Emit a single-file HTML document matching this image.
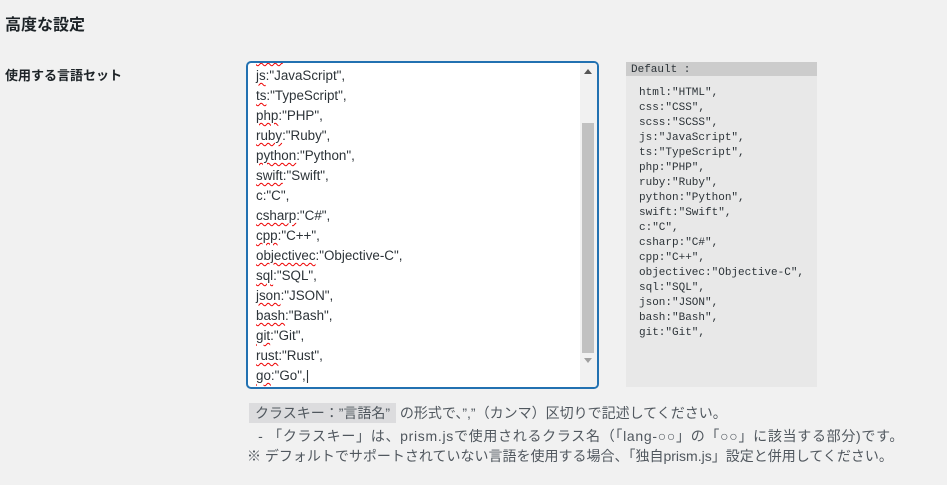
<!DOCTYPE html>
<html><head><meta charset="utf-8"><style>
body{margin:0;background:#f1f1f1;width:947px;height:485px;overflow:hidden;font-family:"Liberation Sans","Noto Sans CJK JP",sans-serif;color:#1d2327;position:relative}
.h{position:absolute;left:5px;top:11px;font-size:16px;font-weight:bold}
.lab{position:absolute;left:5px;top:65px;font-size:13px;font-weight:bold}
.ta{position:absolute;left:247px;top:62px;width:349px;height:324px;border:1px solid #2271b1;border-radius:4px;box-shadow:0 0 0 1px #2271b1;background:#fff;overflow:hidden}
.lines{position:absolute;left:8px;top:-17px;font-size:13.4px;line-height:20px;color:#2c3338}
.lines u{text-decoration:underline wavy #e00;text-decoration-thickness:1px;text-underline-offset:2px}
.sb{position:absolute;right:0;top:0;width:17px;height:100%;background:#f1f1f1}
.th{position:absolute;left:2px;width:12px;top:60px;height:230px;background:#c1c1c1}
.def{position:absolute;left:626px;top:62px;width:191px;height:325px;background:#e8e8e8;font-family:"Liberation Mono","DejaVu Sans Mono",monospace;font-size:11px;color:#2c3338}
.def .hd{background:#ccc;height:14px;line-height:16px;padding-left:5px}
.def pre{margin:10px 0 0 13px;font:inherit;line-height:15px}
.d{position:absolute;left:249px;font-size:14px;color:#50575e;white-space:nowrap}
code{background:#dcdcde;padding:2px 6px;font-family:inherit}
</style></head><body>
<div class="h">高度な設定</div>
<div class="lab">使用する言語セット</div>
<div class="ta"><div class="lines">
<div><u>scss</u>:"SCSS",</div>
<div><u>js</u>:"JavaScript",</div>
<div><u>ts</u>:"TypeScript",</div>
<div><u>php</u>:"PHP",</div>
<div><u>ruby</u>:"Ruby",</div>
<div><u>python</u>:"Python",</div>
<div><u>swift</u>:"Swift",</div>
<div>c:"C",</div>
<div><u>csharp</u>:"C#",</div>
<div><u>cpp</u>:"C++",</div>
<div><u>objectivec</u>:"Objective-C",</div>
<div><u>sql</u>:"SQL",</div>
<div><u>json</u>:"JSON",</div>
<div><u>bash</u>:"Bash",</div>
<div><u>git</u>:"Git",</div>
<div><u>rust</u>:"Rust",</div>
<div><u>go</u>:"Go",|</div>
</div>
<div class="sb"><div style="position:absolute;left:4px;top:6px;border:4px solid transparent;border-bottom:5px solid #555;border-top:0"></div><div class="th"></div><div style="position:absolute;left:4px;top:295px;border:4px solid transparent;border-top:5px solid #a0a0a0;border-bottom:0"></div></div>
</div>
<div class="def"><div class="hd">Default :</div><pre>html:"HTML",
css:"CSS",
scss:"SCSS",
js:"JavaScript",
ts:"TypeScript",
php:"PHP",
ruby:"Ruby",
python:"Python",
swift:"Swift",
c:"C",
csharp:"C#",
cpp:"C++",
objectivec:"Objective-C",
sql:"SQL",
json:"JSON",
bash:"Bash",
git:"Git",</pre></div>
<div class="d" style="top:403px"><code>クラスキー：”言語名”</code> の形式で、”,”（カンマ）区切りで記述してください。</div>
<div class="d" style="top:426px;letter-spacing:0.7px">&nbsp;&nbsp;- 「クラスキー」は、prism.jsで使用されるクラス名（「lang-○○」の「○○」に該当する部分)です。</div>
<div class="d" style="top:446px;left:247px">※ デフォルトでサポートされていない言語を使用する場合、「独自prism.js」設定と併用してください。</div>
</body></html>
